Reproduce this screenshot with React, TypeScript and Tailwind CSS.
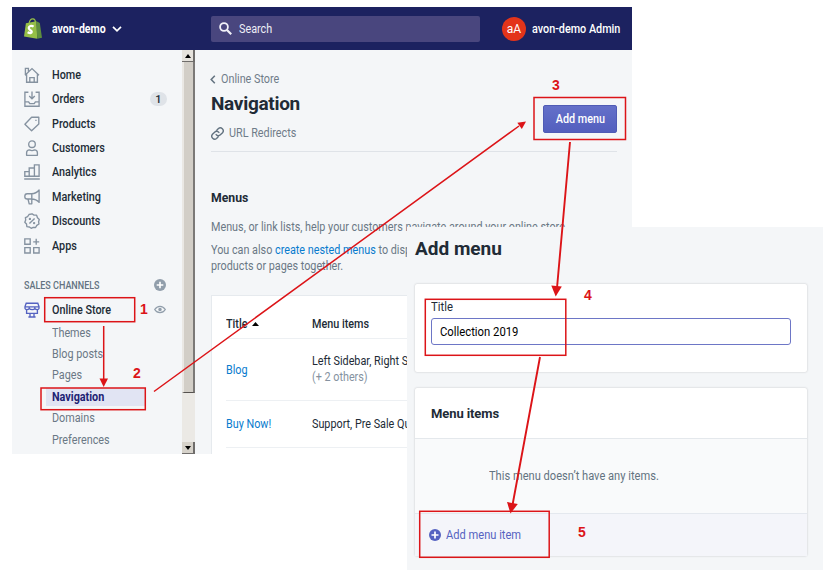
import type { ReactNode } from "react";

function Icon({ children, className = "" }: { children: ReactNode; className?: string }) {
  return (
    <svg
      viewBox="0 0 16 16"
      fill="none"
      stroke="currentColor"
      strokeWidth="1.35"
      className={`h-4 w-4 shrink-0 ${className}`}
    >
      {children}
    </svg>
  );
}

/** Slightly condensed text, used for all 12px interface copy. */
function Copy({ children, className = "" }: { children: ReactNode; className?: string }) {
  return <span className={`inline-block origin-left scale-x-[0.9] whitespace-nowrap ${className}`}>{children}</span>;
}

const navItems: { label: string; badge?: string; icon: ReactNode }[] = [
  {
    label: "Home",
    icon: (
      <path d="M2.6 7.2V15.2H13.4V7.2M1 8.2 8 1.6 15 8.2M1.4 7.4V1.4H4.4V4.6M5.8 15V10.6H10.2V15" />
    ),
  },
  {
    label: "Orders",
    badge: "1",
    icon: <path d="M4.4 1.2H.9V15.2H15.1V1.2H11.6M8 .6V7.6M5.2 5 8 7.8 10.8 5M1 10.8H4.6L5.8 12.6H10.2L11.4 10.8H15" />,
  },
  {
    label: "Products",
    icon: (
      <>
        <path d="M.9 8.2 7.6 1.2H14.8V8L7.6 14.8Z" strokeLinejoin="round" />
        <path d="M11.3 4.3h1.3" />
      </>
    ),
  },
  {
    label: "Customers",
    icon: (
      <>
        <circle cx="8" cy="4.2" r="3.3" />
        <path d="M2.6 15.3V12.8C2.6 10.8 4 9.9 5.6 9.9 7 10.7 9 10.7 10.4 9.9 12 9.9 13.4 10.8 13.4 12.8V15.3Z" strokeLinejoin="round" />
      </>
    ),
  },
  {
    label: "Analytics",
    icon: <path d="M.8 12.2V7.6H5.2V12.2ZM5.2 12.2V4H10.4V12.2ZM10.4 12.2V.9H15.1V12.2ZM.2 15H15.8" />,
  },
  {
    label: "Marketing",
    icon: (
      <path d="M15.1 1V13.4C13 11 10.4 10 7.6 10H3.2C1.7 10 .8 8.8 .8 7.4S1.7 4.7 3.2 4.7H7.6C10.4 4.7 13 3.6 15.1 1ZM7.8 4.8V14.8H5.2L4 10" strokeLinejoin="round" />
    ),
  },
  {
    label: "Discounts",
    icon: (
      <>
        <path d="M8 .8 10 2.1 12.6 2.2 13.5 4.7 15.3 6.4 14.6 8.8 15 11 12.8 12.4 11.6 14.5 9.2 14.3 7.2 15.3 5.4 14 2.9 13.6 2.5 11 .8 9.3 1.7 7 1.4 4.6 3.6 3.6 5 1.5Z" strokeLinejoin="round" />
        <path d="M5.4 10.6 10.6 5.4" />
        <circle cx="5.9" cy="5.9" r=".5" />
        <circle cx="10.1" cy="10.1" r=".5" />
      </>
    ),
  },
  {
    label: "Apps",
    icon: <path d="M.8 .8H6.2V6.2H.8ZM.8 9.6H6.2V15H.8ZM9.7 9.6H15.1V15H9.7ZM12.2 .8V6.8M9.2 3.8H15.2" />,
  },
];

const subItems = ["Themes", "Blog posts", "Pages", "Navigation", "Domains", "Preferences"];

function TopBar() {
  return (
    <header className="flex h-[43px] shrink-0 items-center bg-[#1c2260] text-[12px] text-white">
      <div className="flex w-[199px] items-center pl-[12px]">
        <svg viewBox="0 0 18 21" className="h-[21px] w-[18px]">
          <path d="M5.2 5C5.6 2.4 7.4.7 9 .8 10.6.9 11.4 2.5 11.5 4.5" fill="none" stroke="#95bf47" strokeWidth="1.2" />
          <path d="M1.9 5.2 12.5 3.2 13.2 20.7 0 18.4Z" fill="#95bf47" />
          <path d="M12.5 3.2 15.8 5 18 19.7 13.2 20.7Z" fill="#5e8e3e" />
          <path d="M9.6 8.6C7.4 7 4.7 8 4.7 10.1 4.7 12.1 7.9 12.4 7.8 14 7.6 15.8 5.5 15.2 3.6 14.2" fill="none" stroke="#fff" strokeWidth="2.2" />
        </svg>
        <span className="ml-[10px] w-[60px] font-bold"><Copy className="scale-x-[0.88]">avon-demo</Copy></span>
        <svg viewBox="0 0 10 6" className="h-[6px] w-[10px]" fill="none" stroke="white" strokeWidth="1.7">
          <path d="M1 .8 5 4.8 9 .8" />
        </svg>
      </div>
      <div className="flex h-[26px] w-[269px] items-center rounded-[2px] bg-[#49467e] pl-[8px]">
        <svg viewBox="0 0 13 13" className="h-[13px] w-[13px]" fill="none" stroke="#f1f1f8" strokeWidth="1.8">
          <circle cx="5" cy="5" r="3.9" />
          <path d="M8 8 12.2 12.2" strokeWidth="2.2" />
        </svg>
        <Copy className="ml-[7px] text-[#eeeef6]">Search</Copy>
      </div>
      <div className="ml-[22px] flex h-6 w-6 items-center justify-center rounded-full bg-[#e3341a]">aA</div>
      <Copy className="ml-[6px] font-medium">avon-demo Admin</Copy>
    </header>
  );
}

function Sidebar() {
  return (
    <nav className="flex w-[170px] shrink-0 flex-col pt-[12.5px] text-[12px]">
      {navItems.map((item) => (
        <div key={item.label} className="flex h-[24.45px] items-center pl-[12px] font-medium text-[#212b36]">
          <Icon className="text-[#8592a0]">{item.icon}</Icon>
          <Copy className="ml-[12px]">{item.label}</Copy>
          {item.badge && (
            <span className="mr-[15px] ml-auto flex h-[14px] w-[17px] items-center justify-center rounded-full bg-[#dfe3e8] pt-px text-[11px] leading-[13px]">
              {item.badge}
            </span>
          )}
        </div>
      ))}
      <div className="mt-[14.5px] flex h-[25px] items-center pl-[12px] text-[#637381]">
        <Copy className="text-[10px] font-medium">SALES CHANNELS</Copy>
        <svg viewBox="0 0 12 12" className="mr-[16px] ml-auto h-3 w-3">
          <circle cx="6" cy="6" r="6" fill="#919eab" />
          <path d="M6 2.7V9.3M2.7 6H9.3" stroke="#fff" strokeWidth="1.6" />
        </svg>
      </div>
      <div className="flex h-[24px] items-center pl-[12px] font-medium text-[#212b36]">
        <Icon className="text-[#5563c1]">
          <path d="M2.2 1.2H13.8L15 4.6V6.4C14.6 8 12 8 11 6.6 10 8 6.6 8 5.2 6.6 4 8 1.4 8 1 6.4V4.6ZM1 4.8H15M5.2 4.8V6.6M10.8 4.8V6.6M2.6 7.6V11.4H13.4V7.6M6 11.4V14.6M10 11.4V14.6M4.4 15H11.6" />
        </Icon>
        <Copy className="ml-[12px]">Online Store</Copy>
        <svg viewBox="0 0 12 8" className="mr-[16px] ml-auto h-[9px] w-3" fill="none" stroke="#919eab" strokeWidth="1.3">
          <path d="M.7 4C2 1.9 3.8.8 6 .8S10 1.9 11.3 4C10 6.1 8.2 7.2 6 7.2S2 6.1.7 4Z" />
          <circle cx="6" cy="4" r="1.1" fill="#919eab" />
        </svg>
      </div>
      <div className="pt-[0.5px]">
        {subItems.map((label) =>
          label === "Navigation" ? (
            <div key={label} className="flex h-[21.4px] items-center pl-[34px]">
              <span className="flex h-[18px] w-[99px] items-center bg-[#e1e4f3] pl-[6px] font-bold text-[#1d2273]">
                <Copy>{label}</Copy>
              </span>
            </div>
          ) : (
            <div key={label} className="flex h-[21.4px] items-center pl-[40px] text-[#6a7885]">
              <Copy>{label}</Copy>
            </div>
          ),
        )}
      </div>
    </nav>
  );
}

function Scrollbar() {
  return (
    <div className="flex w-[13px] shrink-0 flex-col bg-[#ebe9e5]">
      <div className="flex h-[12px] items-center justify-center border-r-2 border-b border-[#6f6d6b] bg-[#e6e3dd]">
        <svg viewBox="0 0 6 4" className="h-[4px] w-[6px]"><path d="M0 4 3 0 6 4Z" /></svg>
      </div>
      <div className="h-[331px] border-r-2 border-b border-l-2 border-r-[#7b7977] border-b-[#55524f] border-l-[#eae8e4] bg-[#d2cec7]" />
      <div className="mt-auto flex h-[12px] items-center justify-center border-r-2 border-b border-[#6f6d6b] bg-[#d6d2ca]">
        <svg viewBox="0 0 6 4" className="h-[4px] w-[6px]"><path d="M0 0 3 4 6 0Z" /></svg>
      </div>
    </div>
  );
}

function NavigationPage() {
  return (
    <main className="flex min-w-0 flex-1 flex-col overflow-hidden pl-[16px] text-[12px] whitespace-nowrap">
      <div className="mt-[21px] flex h-4 items-center text-[#6f7c89]">
        <svg viewBox="0 0 6 10" className="-ml-[1px] h-[9px] w-[6px]" fill="none" stroke="#637381" strokeWidth="1.7">
          <path d="M5 .8 1 5 5 9.2" />
        </svg>
        <Copy className="ml-[5px]">Online Store</Copy>
      </div>
      <div className="flex w-[406px] border-b border-[#dfe3e8] pb-[10px]">
        <div>
          <h1 className="mt-[5px] text-[19px] leading-[24px] font-bold tracking-[-0.3px] text-[#212b36]">Navigation</h1>
          <div className="mt-[9px] flex h-4 items-center text-[#6f7c89]">
            <svg viewBox="0 0 24 24" className="h-[13px] w-[13px]" fill="none" stroke="#637381" strokeWidth="2.6" strokeLinecap="round">
              <path d="M9.5 14a5.2 5.2 0 0 0 7.8.5l4-4a5.4 5.4 0 0 0-7.6-7.6l-3 3" />
              <path d="M14.5 10a5.2 5.2 0 0 0-7.8-.5l-4 4a5.4 5.4 0 0 0 7.6 7.6l3-3" />
            </svg>
            <Copy className="ml-[5px]">URL Redirects</Copy>
          </div>
        </div>
        <button className="mt-[18px] ml-auto flex h-[28px] w-[74px] items-center justify-center rounded-[2px] border border-[#4f5bb5] bg-gradient-to-b from-[#6470c9] to-[#535fbe] font-medium text-white">
          <span className="inline-block scale-x-[0.9]">Add menu</span>
        </button>
      </div>
      <h2 className="mt-[38px] text-[13px] leading-[16px] font-bold text-[#212b36]">
        <Copy className="scale-x-[0.94]">Menus</Copy>
      </h2>
      <p className="mt-[13px] leading-[16px] text-[#6a7885]">
        <Copy>Menus, or link lists, help your customers navigate around your online store</Copy>
      </p>
      <p className="mt-[8px] leading-[15.5px] text-[#6a7885]">
        <Copy>
          You can also <span className="text-[#087bce]">create nested menus</span> to disp
          <br />
          products or pages together.
        </Copy>
      </p>
      <section className="mt-[21px] flex w-[210px] flex-1 flex-col overflow-hidden border-t border-l border-[#e6eaee] bg-white pl-[14px] text-[#212b36]">
        <div className="flex h-[43px] items-end border-b border-[#edf0f3] pb-[5px] font-medium">
          <span className="flex w-[86px] shrink-0 items-center">
            <span className="w-[26px]"><Copy>Title</Copy></span>
            <svg viewBox="0 0 7 4" className="h-[4px] w-[7px]"><path d="M0 4 3.5 0 7 4Z" /></svg>
          </span>
          <Copy>Menu items</Copy>
        </div>
        <div className="flex h-[62px] items-center border-b border-[#edf0f3]">
          <span className="w-[86px] shrink-0 text-[#087bce]"><Copy>Blog</Copy></span>
          <Copy className="leading-[15.5px]">
            Left Sidebar, Right S
            <br />
            <span className="text-[#8592a0]">(+ 2 others)</span>
          </Copy>
        </div>
        <div className="flex h-[47px] items-center border-b border-[#edf0f3]">
          <span className="w-[86px] shrink-0 text-[#087bce]"><Copy>Buy Now!</Copy></span>
          <Copy>Support, Pre Sale Qu</Copy>
        </div>
      </section>
    </main>
  );
}

function AddMenuWindow() {
  return (
    <section className="absolute top-[227px] left-[407px] flex h-[343px] w-[416px] flex-col bg-[#f4f6f8] pr-[16px] pl-[8px] text-[12px] text-[#212b36]">
      <h1 className="mt-[10px] text-[19px] leading-[24px] font-bold">Add menu</h1>
      <div className="mt-[23px] flex h-[88px] flex-col rounded-[2px] bg-white px-[16px] shadow-[0_0_2px_rgba(63,63,68,0.3)]">
        <label className="mt-[15px] leading-[16px]"><Copy className="scale-x-[0.94]">Title</Copy></label>
        <div className="mt-[3px] flex h-[27px] items-center rounded-[3px] border border-[#6d76c6] pl-[8px] text-black">
          <Copy className="scale-x-[0.94]">Collection 2019</Copy>
        </div>
      </div>
      <div className="mt-[16px] flex h-[168px] flex-col rounded-[2px] bg-white shadow-[0_0_2px_rgba(63,63,68,0.3)]">
        <h2 className="flex h-[51px] items-center border-b border-[#e4e8ec] pt-px pl-[16px] text-[13px] font-bold tracking-[-0.1px]">Menu items</h2>
        <div className="flex h-[74px] items-center bg-[#f9fafb] pl-[74px] text-[#637381]">
          <Copy className="scale-x-[0.925]">This menu doesn’t have any items.</Copy>
        </div>
        <div className="flex flex-1 items-center border-t border-[#e4e8ee] bg-[#f4f5fa] pl-[14px] text-[#5563c1]">
          <svg viewBox="0 0 12 12" className="h-[12px] w-[12px]">
            <circle cx="6" cy="6" r="6" fill="#5563c1" />
            <path d="M6 2.5V9.5M2.5 6H9.5" stroke="#fff" strokeWidth="1.7" />
          </svg>
          <Copy className="ml-[5px] scale-x-[0.925]">Add menu item</Copy>
        </div>
      </div>
    </section>
  );
}

const steps = [
  { n: 1, x: 140, y: 314 },
  { n: 2, x: 133, y: 378 },
  { n: 3, x: 552, y: 90 },
  { n: 4, x: 584, y: 300 },
  { n: 5, x: 578, y: 537 },
];

function Annotations() {
  return (
    <svg viewBox="0 0 829 570" className="pointer-events-none absolute inset-0 h-[570px] w-[829px]">
      <g fill="none" stroke="#dc1418" strokeWidth="1.5">
        <rect x="44.7" y="297.7" width="90" height="24" />
        <rect x="41" y="388" width="104.3" height="21.7" />
        <rect x="534" y="97.5" width="91.5" height="42" />
        <rect x="425.3" y="299.3" width="140.5" height="56" />
        <rect x="419.7" y="511.3" width="129.5" height="46" />
        <path d="M103.7 326V380M154 391.5 519 126" />
        <path d="M570 142 557 288M540 357 512.5 505" strokeWidth="1.9" />
      </g>
      <g fill="#dc1418">
        <path d="M99.5 378.5H108L103.7 387Z" />
        <path d="M526 121.5 517.3 122.7 521.8 129Z" />
        <path d="M551.3 285.5 561.8 286.4 555.7 296.5Z" />
        <path d="M507 502 517.8 504 510.5 513.5Z" />
        {steps.map((s) => (
          <text key={s.n} x={s.x} y={s.y} className="font-['Liberation_Sans',Arial,sans-serif] text-[14px] font-bold">
            {s.n}
          </text>
        ))}
      </g>
    </svg>
  );
}

export default function App() {
  return (
    <div className="relative h-[570px] w-[829px] overflow-hidden bg-white pt-[7px] pl-[12px] font-[Roboto,sans-serif]">
      <div className="flex h-[447px] w-[620px] flex-col overflow-hidden bg-[#f4f6f8]">
        <TopBar />
        <div className="flex min-h-0 flex-1">
          <Sidebar />
          <Scrollbar />
          <NavigationPage />
        </div>
      </div>
      <AddMenuWindow />
      <Annotations />
    </div>
  );
}
